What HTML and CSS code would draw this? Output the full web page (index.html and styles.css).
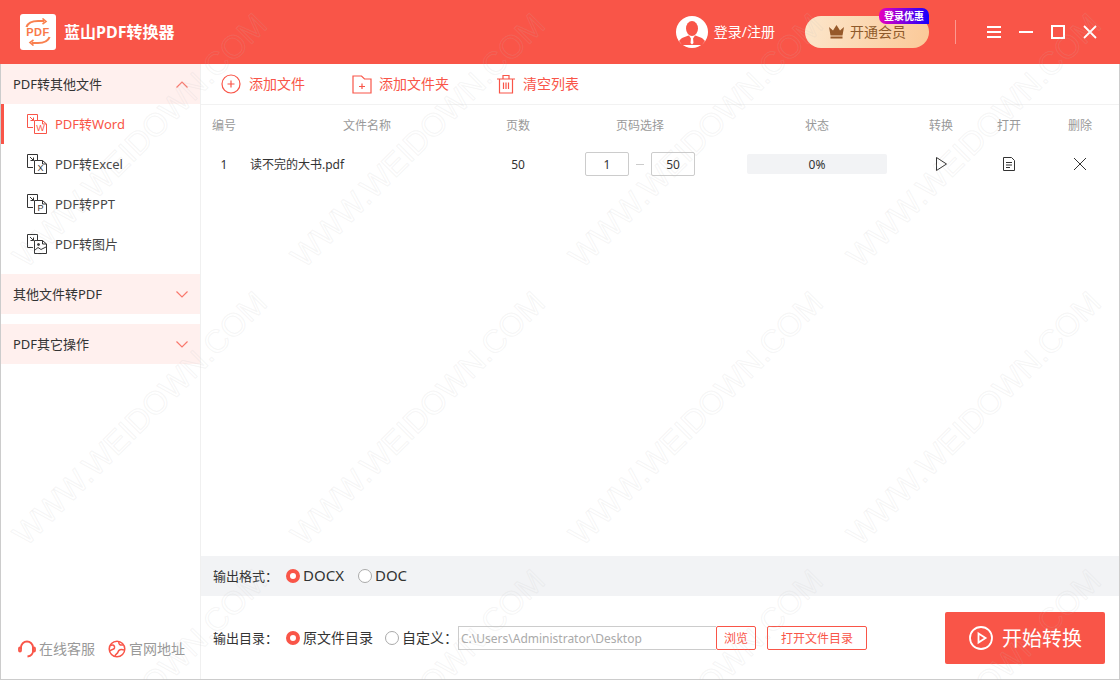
FILE: index.html
```html
<!DOCTYPE html>
<html>
<head>
  <title>蓝山PDF转换器</title>
  <link rel="stylesheet" href="styles.css">
</head>
<body>
  <div class="app">
    <header class="topbar">
      <div class="logo">
        <svg width="28" height="28" viewBox="0 0 28 28" fill="none" stroke="#f9804f" stroke-width="2.200">
          <path d="M2.500 9C4 4.500 8 3 14 3H20"/>
          <path d="M18.500 .5L22 3.500L18.500 6" stroke-width="1.600"/>
          <path d="M25.500 19C24 23.500 20 25 14 25H8"/>
          <path d="M9.500 22L6 24.500L9.500 27.500" stroke-width="1.600"/>
        </svg>
        <span class="logo-text">PDF</span>
      </div>
      <div class="app-name">蓝山PDF转换器</div>
      <div class="user">
        <svg width="32" height="32" viewBox="0 0 32 32">
          <circle cx="16" cy="16" r="16" fill="#fff"/>
          <ellipse cx="16" cy="12.500" rx="6" ry="7.500" fill="#f95548"/>
          <path d="M3 25C6 21 10 20.500 13 19.500L16 24L19 19.500C22 20.500 26 21 29 25L26 29H6Z" fill="#f95548"/>
          <path d="M15 22H17L17.500 27L16 28.500L14.500 27Z" fill="#fff"/>
        </svg>
        <span>登录/注册</span>
      </div>
      <div class="vip">
        <svg width="15" height="14" viewBox="0 0 15 14" fill="#96592a">
          <path d="M0 2L4 5.500L7.500 0L11 5.500L15 2L13.500 10.500H1.500Z"/>
          <rect x="1.500" y="11.500" width="12" height="2"/>
        </svg>
        <span class="vip-text">开通会员</span>
        <span class="vip-badge">登录优惠</span>
      </div>
      <div class="top-divider"></div>
      <div class="win-btns">
        <svg width="14" height="14" viewBox="0 0 14 14" fill="#fff">
          <rect y="1" width="14" height="2"/><rect y="6" width="14" height="2"/><rect y="11" width="14" height="2"/>
        </svg>
        <svg width="14" height="14" viewBox="0 0 14 14" fill="#fff"><rect y="6" width="14" height="2"/></svg>
        <svg width="14" height="14" viewBox="0 0 14 14" fill="none" stroke="#fff" stroke-width="2"><rect x="1" y="1" width="12" height="12"/></svg>
        <svg width="14" height="14" viewBox="0 0 14 14" fill="none" stroke="#fff" stroke-width="1.800"><path d="M1 1L13 13M13 1L1 13"/></svg>
      </div>
    </header>

    <div class="content">
      <aside class="sidebar">
        <div class="group-head">
          <span>PDF转其他文件</span>
          <svg class="chevron" width="12" height="7" viewBox="0 0 12 7"><path d="M.5 6.500L6 1L11.500 6.500"/></svg>
        </div>
        <div class="side-item active">
          <svg class="doc-icon" width="20" height="20" viewBox="0 0 20 20">
            <path d="M.5.500H10.500V6M6 13.500H.5V.5"/><path d="M3 3L6.500 6.500M6.500 3.500V6.500H3.500"/>
            <path d="M7.500 6.500H15.500L19.500 10V19.500H7.500Z"/><path d="M15.500 6.500V10H19.500"/>
            <text x="13.500" y="17" class="doc-letter">W</text>
          </svg>
          <span>PDF转Word</span>
        </div>
        <div class="side-item">
          <svg class="doc-icon" width="20" height="20" viewBox="0 0 20 20">
            <path d="M.5.500H10.500V6M6 13.500H.5V.5"/><path d="M3 3L6.500 6.500M6.500 3.500V6.500H3.500"/>
            <path d="M7.500 6.500H15.500L19.500 10V19.500H7.500Z"/><path d="M15.500 6.500V10H19.500"/>
            <text x="13.500" y="17" class="doc-letter">X</text>
          </svg>
          <span>PDF转Excel</span>
        </div>
        <div class="side-item">
          <svg class="doc-icon" width="20" height="20" viewBox="0 0 20 20">
            <path d="M.5.500H10.500V6M6 13.500H.5V.5"/><path d="M3 3L6.500 6.500M6.500 3.500V6.500H3.500"/>
            <path d="M7.500 6.500H15.500L19.500 10V19.500H7.500Z"/><path d="M15.500 6.500V10H19.500"/>
            <text x="13.500" y="17" class="doc-letter">P</text>
          </svg>
          <span>PDF转PPT</span>
        </div>
        <div class="side-item">
          <svg class="doc-icon" width="20" height="20" viewBox="0 0 20 20">
            <path d="M.5.500H10.500V6M6 13.500H.5V.5"/><path d="M3 3L6.500 6.500M6.500 3.500V6.500H3.500"/>
            <path d="M7.500 6.500H15.500L19.500 10V19.500H7.500Z"/><path d="M15.500 6.500V10H19.500"/>
            <circle cx="11.500" cy="10.500" r="1" class="dot"/><path d="M8 16L11 13.500L14 15.500L19 13"/>
          </svg>
          <span>PDF转图片</span>
        </div>
        <div class="group-head spaced">
          <span>其他文件转PDF</span>
          <svg class="chevron" width="12" height="7" viewBox="0 0 12 7"><path d="M.5.500L6 6L11.500 .5"/></svg>
        </div>
        <div class="group-head spaced">
          <span>PDF其它操作</span>
          <svg class="chevron" width="12" height="7" viewBox="0 0 12 7"><path d="M.5.500L6 6L11.500 .5"/></svg>
        </div>
        <div class="side-foot">
          <div class="foot-link">
            <svg width="18" height="18" viewBox="0 0 18 18" fill="none" stroke="#f95548" stroke-width="1.800">
              <path d="M3 9V7.500A6 6 0 0 1 15 7.500V11C15 14 13 16 9.500 16.500"/>
              <rect x="1" y="7.500" width="2" height="4" rx="1"/><rect x="15" y="7.500" width="2" height="4" rx="1"/>
            </svg>
            <span>在线客服</span>
          </div>
          <div class="foot-link">
            <svg width="18" height="18" viewBox="0 0 18 18" fill="none" stroke="#f95548" stroke-width="1.500">
              <circle cx="9" cy="9" r="7.800"/>
              <path d="M2 5.500C5 4 7 5.500 6.500 8C6 10 3.500 9 2 11M11 1.500C10 4 12 5.500 15 5M16 10C13 8.500 10.500 10 10 12C9.500 14 7 14 7 16.500"/>
            </svg>
            <span>官网地址</span>
          </div>
        </div>
      </aside>

      <main class="main">
        <div class="toolbar">
          <div class="tool tool-add">
            <svg width="20" height="20" viewBox="0 0 20 20">
              <circle cx="10" cy="10" r="9"/><path d="M10 6.500V13.500M6.500 10H13.500"/>
            </svg>
            <span>添加文件</span>
          </div>
          <div class="tool tool-folder">
            <svg width="20" height="20" viewBox="0 0 20 20">
              <path d="M1 2H9.500L12.500 5H19V19H1Z"/><path d="M10 9.500V15M7 12.500H13"/>
            </svg>
            <span>添加文件夹</span>
          </div>
          <div class="tool tool-clear">
            <svg width="18" height="20" viewBox="0 0 18 20">
              <path d="M0 5H18M6 5V1.500H12V5M2.500 5V19H15.500V5M6.500 8.500V15M9 8.500V15M11.500 8.500V15"/>
            </svg>
            <span>清空列表</span>
          </div>
        </div>

        <div class="file-table">
          <div class="file-row file-head">
            <div>编号</div><div>文件名称</div><div>页数</div><div>页码选择</div><div>状态</div><div>转换</div><div>打开</div><div>删除</div>
          </div>
          <div class="file-row file-line">
            <div>1</div>
            <div class="file-name">读不完的大书.pdf</div>
            <div>50</div>
            <div class="page-range">
              <span class="page-box">1</span><span class="page-dash"></span><span class="page-box">50</span>
            </div>
            <div><div class="progress">0%</div></div>
            <div>
              <svg class="row-icon" width="14" height="16" viewBox="0 0 14 16"><path d="M2.500 1.500L12.500 8L2.500 14.500Z"/></svg>
            </div>
            <div>
              <svg class="row-icon" width="14" height="16" viewBox="0 0 14 16"><path d="M1.500 1.500H9.500L12.500 4.500V14.500H1.500ZM4 6.500H10M4 9H10M4 11.500H8"/></svg>
            </div>
            <div>
              <svg class="row-icon" width="14" height="14" viewBox="0 0 14 14"><path d="M1 1L13 13M13 1L1 13"/></svg>
            </div>
          </div>
        </div>

        <div class="format-bar">
          <span class="field-label">输出格式：</span>
          <span class="radio on"></span><span class="radio-text format-name">DOCX</span>
          <span class="radio second"></span><span class="radio-text format-name">DOC</span>
        </div>

        <div class="output-bar">
          <span class="field-label">输出目录：</span>
          <span class="radio on"></span><span class="radio-text">原文件目录</span>
          <span class="radio third"></span><span class="radio-text">自定义：</span>
          <div class="path-box">C:\Users\Administrator\Desktop</div>
          <div class="small-btn browse">浏览</div>
          <div class="small-btn open-dir">打开文件目录</div>
          <div class="start-btn">
            <svg width="24" height="24" viewBox="0 0 24 24" fill="none" stroke="#fff" stroke-width="1.800">
              <circle cx="12" cy="12" r="11"/><path d="M9.500 7.500L16.500 12L9.500 16.500Z"/>
            </svg>
            <span>开始转换</span>
          </div>
        </div>
      </main>
    </div>

    <!-- site mark that runs across the whole window -->
    <div class="marks">
      <div class="mark-row"><span>WWW.WEIDOWN.COM</span><span>WWW.WEIDOWN.COM</span><span>WWW.WEIDOWN.COM</span><span>WWW.WEIDOWN.COM</span></div>
      <div class="mark-row"><span>WWW.WEIDOWN.COM</span><span>WWW.WEIDOWN.COM</span><span>WWW.WEIDOWN.COM</span><span>WWW.WEIDOWN.COM</span></div>
      <div class="mark-row"><span>WWW.WEIDOWN.COM</span><span>WWW.WEIDOWN.COM</span><span>WWW.WEIDOWN.COM</span><span>WWW.WEIDOWN.COM</span></div>
    </div>
  </div>
</body>
</html>
```

FILE: styles.css
```css
* {
    box-sizing: border-box;
}
body {
    margin: 0;
    font-family: "Noto Sans", "Noto Sans CJK SC", sans-serif;
    font-size: 13px;
    color: #333;
    background-color: #fff;
}
.app {
    position: relative;
    width: 1120px;
    height: 680px;
    display: flex;
    flex-direction: column;
    overflow: hidden;
}

/* these labels sit a pixel above the middle of their row */
.app-name,
.user span,
.vip-text,
.group-head span,
.side-item span,
.foot-link span,
.tool span,
.radio-text,
.field-label,
.start-btn span {
    margin-bottom: 2px;
}

/* top bar */
.topbar {
    height: 64px;
    flex: none;
    display: flex;
    align-items: center;
    padding-left: 20px;
    background-color: #f95548;
    color: #fff;
}
.logo {
    position: relative;
    width: 36px;
    height: 36px;
    display: flex;
    align-items: center;
    justify-content: center;
    background-color: #fff;
    border-radius: 3px;
}
.logo-text {
    position: absolute;
    font-family: "Liberation Sans", sans-serif;
    font-size: 11px;
    font-weight: bold;
    letter-spacing: .5px;
    color: #f97a4a;
}
.app-name {
    margin-left: 8px;
    font-size: 16px;
    font-weight: 700;
}
.user {
    margin-left: auto;
    display: flex;
    align-items: center;
    gap: 6px;
    font-size: 14px;
}
.vip {
    position: relative;
    width: 124px;
    height: 32px;
    margin-left: 30px;
    display: flex;
    align-items: center;
    gap: 6px;
    padding-left: 24px;
    font-size: 14px;
    border-radius: 16px;
    background: linear-gradient(100deg, #fce6cb, #fbc998);
    color: #8f5a2a;
}
.vip-badge {
    position: absolute;
    right: 0;
    top: -8px;
    width: 50px;
    height: 16px;
    text-align: center;
    font-size: 10px;
    line-height: 16px;
    font-weight: 700;
    color: #fff;
    border-radius: 7px 7px 0 7px;
    background: linear-gradient(90deg, #e800be, #1400ff);
}
.top-divider {
    width: 1px;
    height: 24px;
    margin-left: 26px;
    background-color: rgba(255, 255, 255, .4);
}
.win-btns {
    display: flex;
    gap: 18px;
    margin-left: 31px;
    margin-right: 23px;
}

.content {
    flex: 1;
    min-height: 0;
    display: flex;
    border-left: 1px solid #ccc;
    border-right: 1px solid #ccc;
    border-bottom: 1px solid #ccc;
}

/* left menu */
.sidebar {
    width: 200px;
    flex: none;
    display: flex;
    flex-direction: column;
    border-right: 1px solid #f0f0f0;
}
.group-head {
    height: 40px;
    flex: none;
    display: flex;
    align-items: center;
    justify-content: space-between;
    padding: 0 12px;
    background-color: #fff0ee;
}
.group-head.spaced {
    margin-top: 10px;
}
.chevron {
    fill: none;
    stroke: #f9786c;
    stroke-width: 1.200;
}
.side-item {
    height: 40px;
    flex: none;
    display: flex;
    align-items: center;
    gap: 8px;
    padding-left: 26px;
    color: #444;
}
.side-item.active {
    color: #f95548;
    border-left: 3px solid #f95548;
    padding-left: 23px;
}
.doc-icon {
    fill: none;
    stroke: #333;
    stroke-width: 1;
}
.doc-icon .dot {
    fill: #333;
}
.doc-letter {
    font-family: "Liberation Sans", sans-serif;
    font-size: 9px;
    fill: #333;
    stroke: none;
    text-anchor: middle;
}
.active .doc-icon {
    stroke: #f95548;
}
.active .doc-letter {
    fill: #f95548;
}
.side-foot {
    margin-top: auto;
    height: 60px;
    display: flex;
    align-items: center;
    gap: 13px;
    padding: 0 0 0 17px;
}
.foot-link {
    display: flex;
    align-items: center;
    gap: 3px;
    font-size: 14px;
    color: #999;
}

/* right side */
.main {
    flex: 1;
    min-width: 0;
    display: flex;
    flex-direction: column;
}
.toolbar {
    height: 41px;
    flex: none;
    display: flex;
    align-items: center;
    padding-left: 20px;
    border-bottom: 1px solid #f2f2f2;
}
.tool {
    display: flex;
    align-items: center;
    gap: 8px;
    font-size: 14px;
    color: #f95548;
}
.tool svg {
    fill: none;
    stroke: #f95548;
    stroke-width: 1.200;
}
.tool-folder {
    margin-left: 47px;
    gap: 7px;
}
.tool-clear {
    margin-left: 48px;
}
.file-table {
    flex: 1;
}
.file-row {
    display: grid;
    grid-template-columns: 46px 240px 62px 182px 172px 76px 60px 80px;
    align-items: center;
    text-align: center;
}
.file-row > :last-child {
    padding-left: 2px;
}
.file-head {
    height: 40px;
    font-size: 12px;
    color: #999;
}
.file-line {
    height: 40px;
    margin-top: -1px;
    font-size: 12px;
}
.file-name {
    text-align: left;
    padding-left: 3px;
}
.page-range {
    display: flex;
    align-items: center;
    justify-content: center;
    gap: 7px;
}
.page-box {
    width: 44px;
    height: 24px;
    line-height: 23px;
    border: 1px solid #ccc;
    border-radius: 2px;
}
.page-dash {
    width: 8px;
    height: 1px;
    background-color: #ccc;
}
.progress {
    width: 140px;
    height: 20px;
    margin: 0 auto;
    line-height: 21px;
    background-color: #f2f3f5;
    border-radius: 2px;
}
.row-icon {
    display: block;
    margin: 0 auto;
    fill: none;
    stroke: #333;
    stroke-width: 1;
}

/* output settings */
.format-bar {
    height: 40px;
    flex: none;
    display: flex;
    align-items: center;
    padding-left: 12px;
    background-color: #f2f3f5;
}
.output-bar {
    height: 83px;
    flex: none;
    display: flex;
    align-items: center;
    padding: 1px 0 0 12px;
}
.field-label {
    width: 73px;
    flex: none;
}
.radio {
    width: 14px;
    height: 14px;
    flex: none;
    border: 1px solid #aaa;
    border-radius: 50%;
    background-color: #fff;
}
.radio.on {
    border: 4px solid #f95548;
}
.radio.second {
    margin-left: 14px;
}
.radio.third {
    margin-left: 12px;
}
.radio-text {
    margin-left: 3px;
    font-size: 14px;
}
.format-name {
    font-size: 15px;
}
.path-box {
    width: 258px;
    height: 24px;
    padding-left: 2px;
    line-height: 23px;
    font-size: 12px;
    color: #aaa;
    border: 1px solid #ccc;
    border-right: none;
}
.small-btn {
    height: 24px;
    line-height: 23px;
    text-align: center;
    font-size: 12px;
    color: #f95548;
    border: 1px solid #f95548;
    border-radius: 2px;
}
.browse {
    width: 40px;
}
.open-dir {
    width: 100px;
    margin-left: 11px;
}
.start-btn {
    width: 160px;
    height: 52px;
    margin-left: 78px;
    display: flex;
    align-items: center;
    gap: 9px;
    padding-left: 24px;
    font-size: 20px;
    color: #fff;
    background-color: #f95548;
    border-radius: 2px;
}

/* outlined site mark */
.marks {
    position: absolute;
    left: 32px;
    top: 237px;
    pointer-events: none;
}
.mark-row {
    height: 278px;
    display: grid;
    grid-template-columns: repeat(4, 278px);
    white-space: nowrap;
}
.mark-row span {
    width: max-content;
    height: 38px;
    font-family: "Liberation Sans", sans-serif;
    font-size: 32px;
    line-height: 38px;
    color: transparent;
    -webkit-text-stroke: 1px rgba(190, 190, 190, .15);
    transform: rotate(-45deg);
    transform-origin: 0 100%;
}
```
